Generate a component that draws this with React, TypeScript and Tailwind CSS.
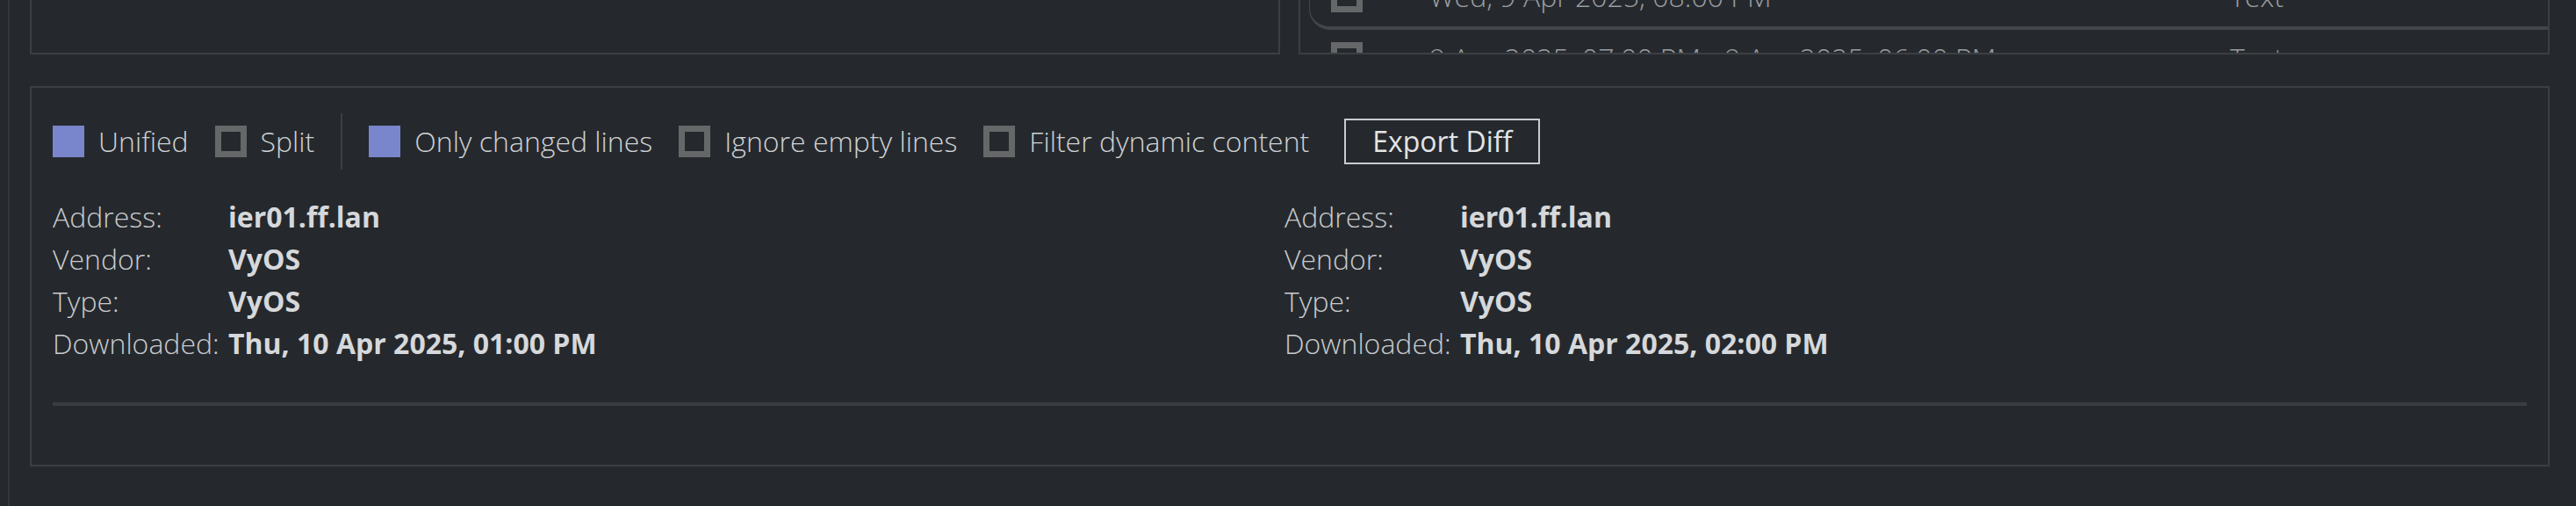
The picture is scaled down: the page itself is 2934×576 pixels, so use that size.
import React from "react";

const F = { fontFamily: '"Open Sans", "Noto Sans", sans-serif' };

function Box({ on }: { on?: boolean }) {
  return on ? (
    <div className="w-[36px] h-[36px] bg-[#7986cb] shrink-0" />
  ) : (
    <div className="w-[36px] h-[36px] border-[7px] border-[#666768] shrink-0" />
  );
}

function Opt({ on, label }: { on?: boolean; label: string }) {
  return (
    <div className="flex items-center gap-[16px]">
      <Box on={on} />
      <span>{label}</span>
    </div>
  );
}

function Info({ date }: { date: string }) {
  const rows: [string, string][] = [
    ["Address:", "ier01.ff.lan"],
    ["Vendor:", "VyOS"],
    ["Type:", "VyOS"],
    ["Downloaded:", date],
  ];
  return (
    <div className="flex flex-col">
      {rows.map(([k, v]) => (
        <div key={k} className="flex h-[48px] items-center">
          <span className="w-[200px] font-light text-[#c9cbce]">{k}</span>
          <span className="font-bold text-[#d6d8db]">{v}</span>
        </div>
      ))}
    </div>
  );
}

export default function App() {
  return (
    <div className="h-[576px] w-[2934px] bg-[#25292d] overflow-hidden text-[32px] text-[#c9cbce]" style={F}>
      <div className="ml-[9px] h-full border-l-2 border-[#33373a] pl-[23px] pr-[30px]">
        <div className="flex h-[62px] gap-[21px]">
          <div className="w-[1424px] border-x-2 border-b-2 border-[#3c3f42]" />
          <div className="flex-1 border-x-2 border-b-2 border-[#3c3f42] overflow-hidden font-light">
            <div className="-mt-[30px] pl-[10px]">
              <div className="h-[64px] flex items-center rounded-bl-[24px] border-l border-b-[4px] border-[#434649] text-[#9a9da1]">
                <div className="ml-[24px] w-[36px] h-[36px] border-[7px] border-[#666768] -mt-[8px]" />
                <span className="ml-[76px] w-[912px] -mt-[8px]">Wed, 9 Apr 2025, 08:00 PM</span>
                <span className="-mt-[8px]">Text</span>
              </div>
              <div className="h-[64px] flex items-center text-[#9a9da1]">
                <div className="ml-[25px] w-[36px] h-[36px] border-[7px] border-[#666768]" />
                <span className="ml-[76px] w-[912px]">9 Apr 2025, 07:00 PM - 9 Apr 2025, 06:00 PM</span>
                <span>Text</span>
              </div>
            </div>
          </div>
        </div>
        <div className="mt-[36px] h-[433px] border-2 border-[#3c3f42] px-[24px] pt-[29px]">
          <div className="flex items-center h-[64px] gap-[30px] font-light text-[#cfd1d4]">
            <Opt on label="Unified" />
            <Opt label="Split" />
            <div className="w-[2px] h-[64px] bg-[#3c3f42]" />
            <Opt on label="Only changed lines" />
            <Opt label="Ignore empty lines" />
            <Opt label="Filter dynamic content" />
            <button className="ml-[10px] h-[52px] px-[30px] border-2 border-[#c9cbce] font-normal text-[#e2e4e6]">Export Diff</button>
          </div>
          <div className="mt-[30px] flex">
            <div className="w-[1403px]">
              <Info date="Thu, 10 Apr 2025, 01:00 PM" />
            </div>
            <Info date="Thu, 10 Apr 2025, 02:00 PM" />
          </div>
          <div className="mt-[43px] h-[4px] bg-[#3a3d40]" />
        </div>
      </div>
    </div>
  );
}
